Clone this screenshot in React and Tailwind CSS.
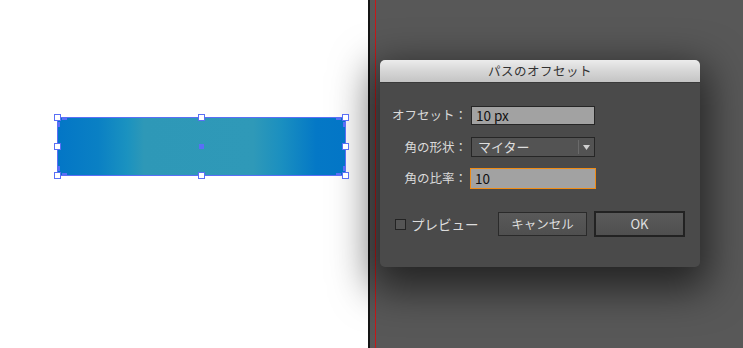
export default function App() {
  const handle = "absolute w-[7px] h-[7px] bg-white border border-[#5a6ff6]"
  const dot = "absolute w-[5px] h-[5px] bg-[#5a6ff6]"
  const jp = { fontFamily: '"Noto Sans CJK JP", "Noto Sans", sans-serif' }

  return (
    <div className="flex h-[348px] w-[743px] overflow-hidden" style={jp}>
      {/* artboard */}
      <div className="w-[368px] h-full bg-white pt-[117px] pl-[57px]">
        <div className="relative w-[289px] h-[59px] border border-[#5a6ff6] bg-[linear-gradient(90deg,#0376c6_0%,#0a80c4_14%,#1a92c0_24%,#2e98b7_30%,#2f99b8_68%,#1a8fc0_78%,#0478c6_90%,#0376c6_100%)]">
          <div className={`${handle} -left-[4px] -top-[4px]`} />
          <div className={`${handle} left-[140px] -top-[4px]`} />
          <div className={`${handle} -right-[4px] -top-[4px]`} />
          <div className={`${handle} -left-[4px] top-[25px]`} />
          <div className={`${handle} -right-[4px] top-[25px]`} />
          <div className={`${handle} -left-[4px] -bottom-[4px]`} />
          <div className={`${handle} left-[140px] -bottom-[4px]`} />
          <div className={`${handle} -right-[4px] -bottom-[4px]`} />
          <div className={`${dot} left-[141px] top-[26px]`} />
          <div className={`${dot} left-[4px] -top-[1px] !h-[3px]`} />
          <div className={`${dot} -left-[1px] top-[4px] !w-[3px]`} />
          <div className={`${dot} right-[4px] -top-[1px] !h-[3px]`} />
          <div className={`${dot} -right-[1px] top-[4px] !w-[3px]`} />
          <div className={`${dot} left-[4px] -bottom-[1px] !h-[3px]`} />
          <div className={`${dot} -left-[1px] bottom-[4px] !w-[3px]`} />
          <div className={`${dot} right-[4px] -bottom-[1px] !h-[3px]`} />
          <div className={`${dot} -right-[1px] bottom-[4px] !w-[3px]`} />
        </div>
      </div>

      {/* panel */}
      <div className="flex-1 h-full bg-[#585858] border-l-2 border-[#151515] flex pl-[5px]">
        <div className="w-px h-full bg-[#c81818]" />
        <div className="pl-[4px] pt-[60px]">
          <div className="w-[320px] h-[207px] rounded-[5px] bg-[#4a4a4a] shadow-[0_14px_40px_8px_rgba(0,0,0,0.6)] flex flex-col">
            <div className="h-[23px] rounded-t-[5px] bg-[linear-gradient(180deg,#ececec_0%,#d6d6d6_50%,#c4c4c4_100%)] border-b border-[#3a3a3a] flex items-center justify-center text-[12.5px] text-[#333] tracking-[0.5px]">
              パスのオフセット
            </div>

            <div className="pt-[23px] flex flex-col">
              <div className="flex items-center h-[19px]">
                <div className="w-[89px] text-right text-[12.5px] text-[#dadada] pr-[2px]">オフセット：</div>
                <div className="ml-[2px] w-[124px] h-[19px] bg-[#a2a2a2] border border-[#262626] flex items-center pl-[4px] text-[13.5px] text-[#111]">
                  10 px
                </div>
              </div>

              <div className="flex items-center h-[20px] mt-[12px]">
                <div className="w-[89px] text-right text-[12.5px] text-[#dadada] pr-[2px]">角の形状：</div>
                <div className="ml-[2px] w-[124px] h-[20px] bg-[#535353] border border-[#262626] flex items-center text-[13px] text-[#dedede]">
                  <span className="flex-1 pl-[6px]">マイター</span>
                  <span className="w-px h-[14px] bg-[#2a2a2a] border-r border-[#6a6a6a]" />
                  <span className="w-[15px] flex justify-center">
                    <svg width="7" height="5" viewBox="0 0 7 5"><path d="M0 0h7L3.5 5z" fill="#d0d0d0" /></svg>
                  </span>
                </div>
              </div>

              <div className="flex items-center h-[21px] mt-[11px]">
                <div className="w-[89px] text-right text-[12.5px] text-[#dadada] pr-[2px]">角の比率：</div>
                <div className="ml-[1px] w-[126px] h-[21px] bg-[#a2a2a2] border border-[#f08c16] flex items-center pl-[4px] text-[13.5px] text-[#111]">
                  10
                </div>
              </div>

              <div className="flex items-center h-[26px] mt-[22px] pl-[15px] pr-[15px]">
                <div className="w-[11px] h-[11px] bg-[#555] border border-[#232323]" />
                <span className="ml-[5px] text-[13.5px] text-[#dcdcdc]">プレビュー</span>
                <div className="ml-auto w-[89px] h-[24px] bg-[linear-gradient(180deg,#595959,#4f4f4f)] border border-[#2a2a2a] flex items-center justify-center text-[12.5px] text-[#dedede]">
                  キャンセル
                </div>
                <div className="ml-[7px] w-[91px] h-[26px] bg-[linear-gradient(180deg,#5a5a5a,#4f4f4f)] border-2 border-[#222] flex items-center justify-center text-[13px] text-[#e0e0e0]">
                  OK
                </div>
              </div>
            </div>
          </div>
        </div>
      </div>
    </div>
  )
}
